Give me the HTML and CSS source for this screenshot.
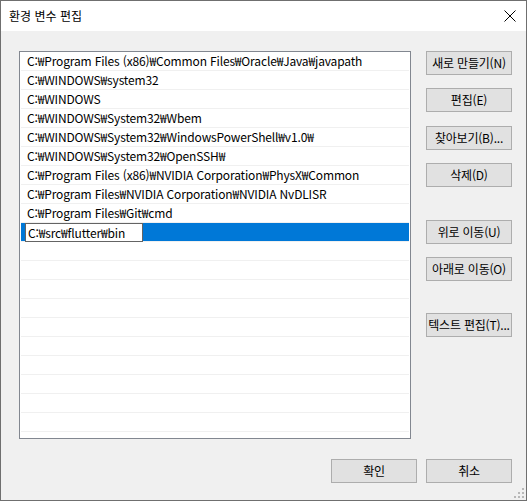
FILE: index.html
```html
<!DOCTYPE html>
<html lang="ko">
<head>
<meta charset="utf-8">
<title>환경 변수 편집</title>
<link rel="stylesheet" href="styles.css">
</head>
<body>
<div class="window">
  <div class="titlebar">
    <span class="title">환경 변수 편집</span>
    <span class="close">
      <svg width="12" height="12" viewBox="0 0 12 12"><path d="M0.5 0.5 L11.5 11.5 M11.5 0.5 L0.5 11.5" stroke="#000" stroke-width="1" fill="none"/></svg>
    </span>
  </div>
  <div class="content">
    <div class="main">
      <div class="list">
        <div class="row">C:₩Program Files (x86)₩Common Files₩Oracle₩Java₩javapath</div>
        <div class="row">C:₩WINDOWS₩system32</div>
        <div class="row">C:₩WINDOWS</div>
        <div class="row">C:₩WINDOWS₩System32₩Wbem</div>
        <div class="row">C:₩WINDOWS₩System32₩WindowsPowerShell₩v1.0₩</div>
        <div class="row">C:₩WINDOWS₩System32₩OpenSSH₩</div>
        <div class="row">C:₩Program Files (x86)₩NVIDIA Corporation₩PhysX₩Common</div>
        <div class="row">C:₩Program Files₩NVIDIA Corporation₩NVIDIA NvDLISR</div>
        <div class="row">C:₩Program Files₩Git₩cmd</div>
        <div class="row selected"><span class="editbox">C:₩src₩flutter₩bin</span></div>
        <div class="row"></div>
        <div class="row"></div>
        <div class="row"></div>
        <div class="row"></div>
        <div class="row"></div>
        <div class="row"></div>
        <div class="row"></div>
        <div class="row"></div>
        <div class="row"></div>
        <div class="row"></div>
      </div>
      <div class="side">
        <button class="btn">새로 만들기(N)</button>
        <button class="btn g1">편집(E)</button>
        <button class="btn g2">찾아보기(B)...</button>
        <button class="btn g1">삭제(D)</button>
        <button class="btn g3">위로 이동(U)</button>
        <button class="btn g1">아래로 이동(O)</button>
        <button class="btn g4">텍스트 편집(T)...</button>
      </div>
    </div>
    <div class="footer">
      <button class="btn">확인</button>
      <button class="btn">취소</button>
    </div>
  </div>
  <div class="grip">
    <svg width="10" height="10" viewBox="0 0 10 10" fill="#b8b8b8">
      <rect x="8" y="0" width="2" height="2"/>
      <rect x="4" y="4" width="2" height="2"/><rect x="8" y="4" width="2" height="2"/>
      <rect x="0" y="8" width="2" height="2"/><rect x="4" y="8" width="2" height="2"/><rect x="8" y="8" width="2" height="2"/>
    </svg>
  </div>
</div>
</body>
</html>
```

FILE: styles.css
```css
* { box-sizing: border-box; }
html, body { margin: 0; padding: 0; }
body {
  width: 527px;
  height: 501px;
  font-family: "Noto Sans CJK KR", "Noto Sans", sans-serif;
  font-size: 12px;
  color: #000;
}
.window {
  position: relative;
  width: 527px;
  height: 501px;
  border: 1px solid #6f6f6f;
  background: #f0f0f0;
  display: flex;
  flex-direction: column;
}
.titlebar {
  height: 30px;
  background: #fff;
  display: flex;
  align-items: center;
  justify-content: space-between;
  padding: 0 0 0 8px;
}
.title {
  font-size: 12px;
  line-height: 1;
  margin-top: -1px;
}
.close {
  width: 46px;
  height: 30px;
  display: flex;
  align-items: center;
  justify-content: center;
  margin-right: -1px;
}
.close svg { display: block; margin-left: 12px; }
.content {
  flex: 1;
  display: flex;
  flex-direction: column;
  padding: 20px 0 0 18px;
}
.main {
  display: flex;
  gap: 15px;
}
.list {
  width: 392px;
  height: 388px;
  border: 1px solid #828790;
  background: #fff;
  padding: 0 1px;
}
.row {
  position: relative;
  height: 19px;
  border-bottom: 1px solid #f0f0f0;
  padding-left: 6px;
  line-height: 18px;
  white-space: nowrap;
  overflow: visible;
  letter-spacing: -0.15px;
}
.row.selected {
  background: #0078d7;
  border-bottom-color: #f0f0f0;
}
.editbox {
  position: absolute;
  left: 4px;
  top: 0;
  width: 118px;
  height: 19px;
  background: #fff;
  border: 1px solid #646464;
  padding-left: 2px;
  line-height: 17px;
}
.side {
  display: flex;
  flex-direction: column;
  align-items: flex-start;
}
.btn {
  width: 86px;
  height: 24px;
  padding: 0;
  background: #e1e1e1;
  border: 1px solid #adadad;
  font-family: "Noto Sans CJK KR", "Noto Sans", sans-serif;
  font-size: 12px;
  color: #000;
  line-height: 20px;
  white-space: nowrap;
  letter-spacing: -0.2px;
}
.side .g1 { margin-top: 13px; }
.side .g2 { margin-top: 14px; }
.side .g3 { margin-top: 33px; }
.side .g4 { margin-top: 32px; }
.footer {
  display: flex;
  justify-content: flex-end;
  gap: 9px;
  padding-right: 14px;
  margin-top: 20px;
}
.grip {
  position: absolute;
  right: 2px;
  bottom: 2px;
  width: 10px;
  height: 10px;
}
.grip svg { display: block; }
```
